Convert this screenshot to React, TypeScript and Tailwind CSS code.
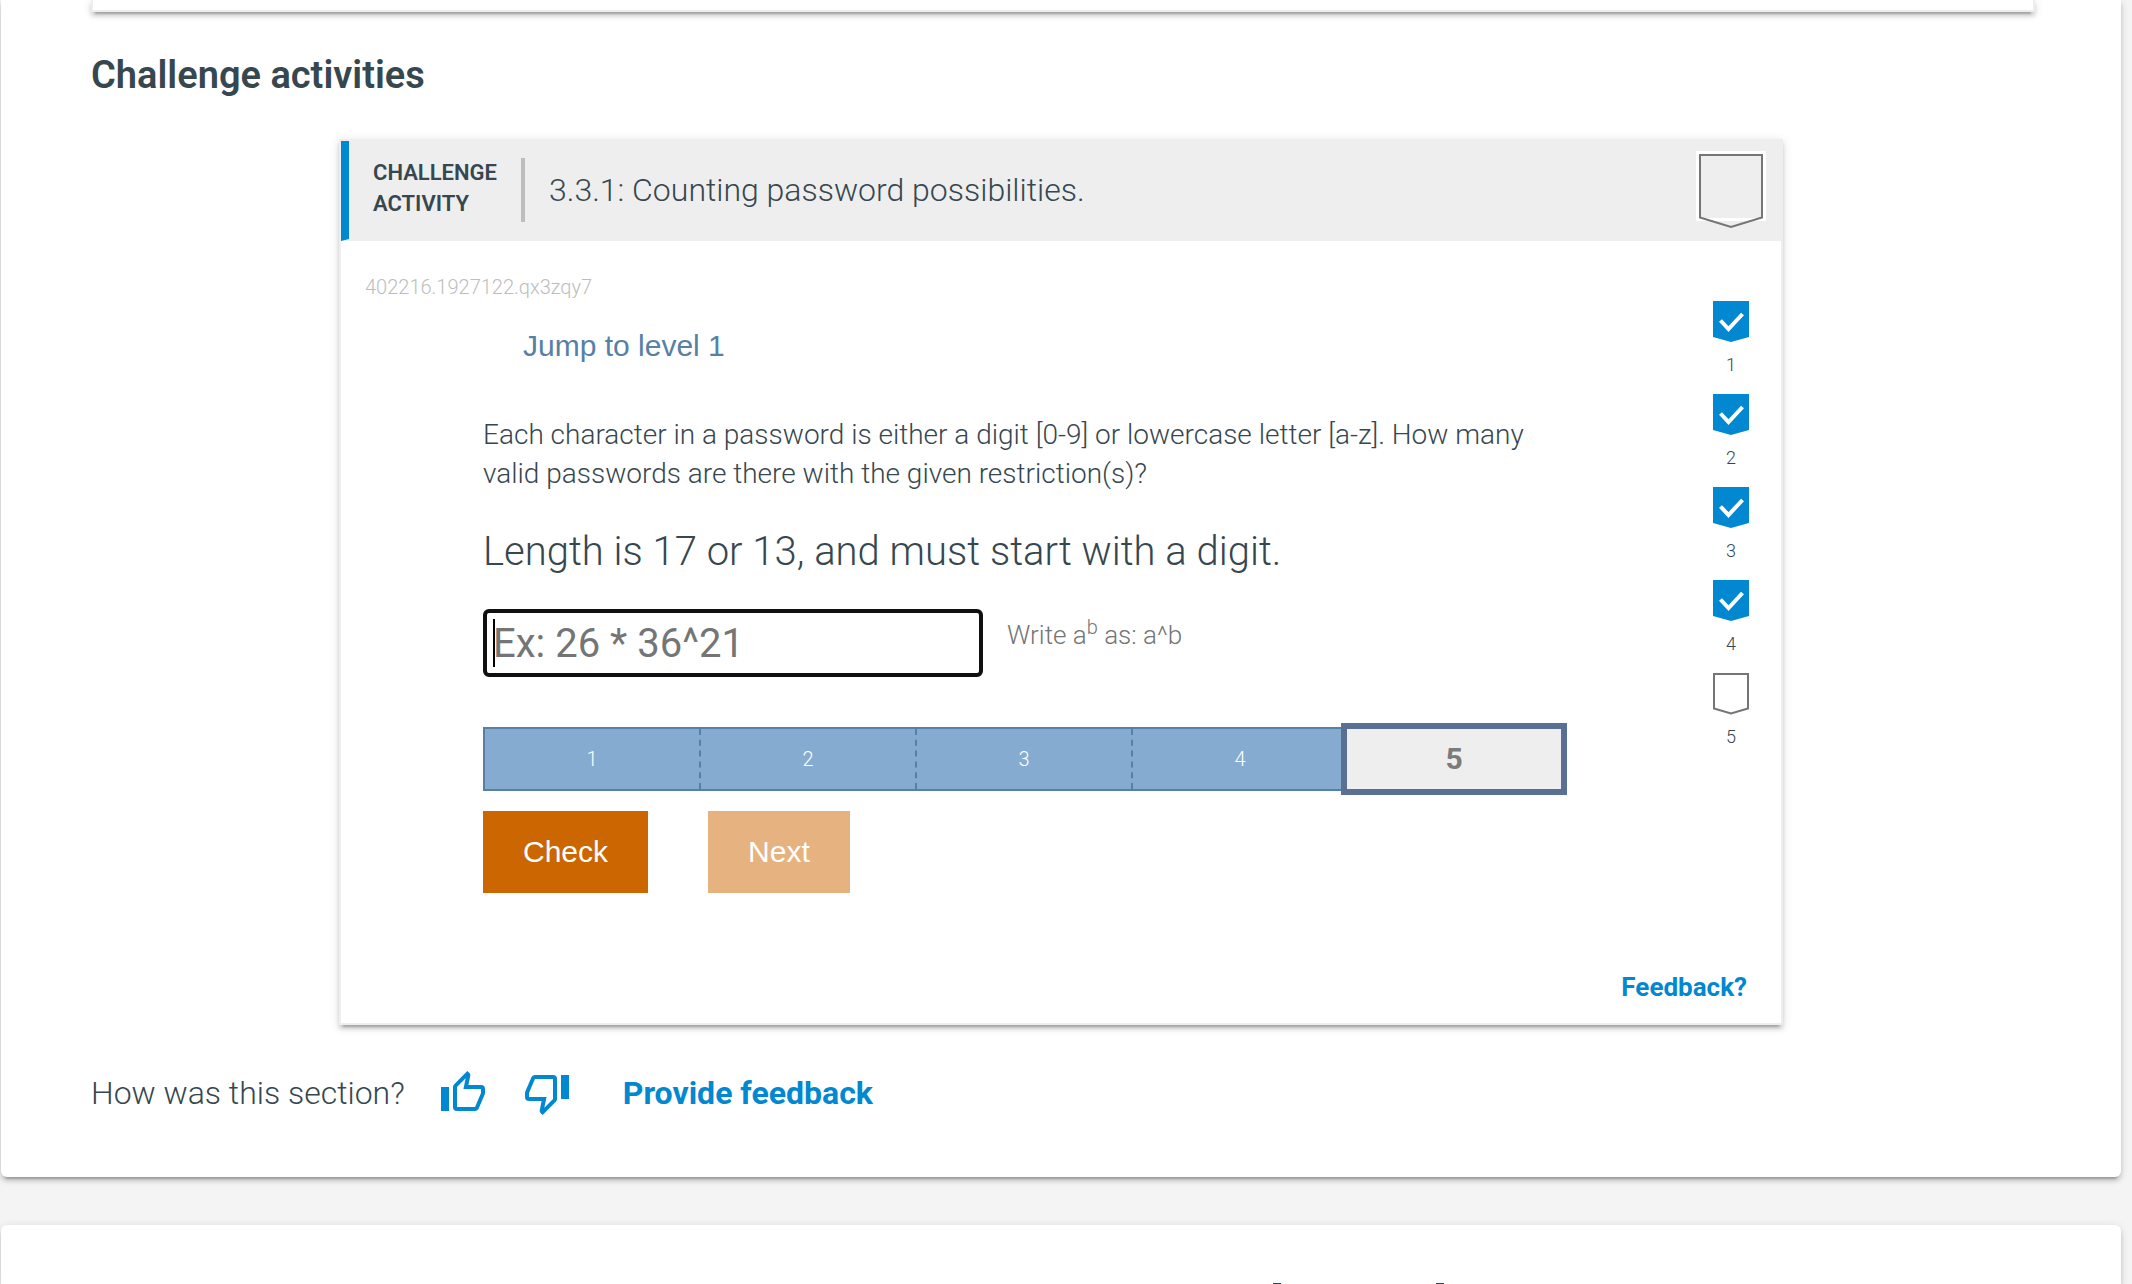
import clsx from "clsx";

const LEVELS = [1, 2, 3, 4, 5];
const CURRENT_LEVEL = 5;

const PANEL_SHADOW =
  "shadow-[0_6px_2px_-4px_rgba(0,0,0,0.2),0_4px_4px_0_rgba(0,0,0,0.14),0_2px_10px_0_rgba(0,0,0,0.12)]";

/** Large outlined badge in the activity header. */
function ActivityBadge() {
  return (
    <svg width="70" height="78" viewBox="0 0 70 78" className="shrink-0" aria-hidden="true">
      <rect width="70" height="70" fill="#fff" />
      <rect x="4" y="4" width="62" height="63" fill="#eeeeee" />
      <path d="M11 70h48l-24 7z" fill="#eeeeee" />
      <path d="M4 4h62v62.500l-31 9.500l-31-9.500z" fill="none" stroke="#757575" strokeWidth="2" />
    </svg>
  );
}

function LevelFlag({ done }: { done: boolean }) {
  return (
    <svg width="36" height="42" viewBox="0 0 36 42" aria-hidden="true">
      {done ? (
        <>
          <path d="M0 0h36v36l-18 5l-18-5z" fill="#0288d1" />
          <path d="M7.500 19.500l8 8.500l14-15" fill="none" stroke="#fff" strokeWidth="4" />
        </>
      ) : (
        <path d="M1 1h34v34.500l-17 5l-17-5z" fill="#fff" stroke="#757575" strokeWidth="2" />
      )}
    </svg>
  );
}

function ThumbIcon({ down = false }: { down?: boolean }) {
  return (
    <svg
      viewBox="0 0 24 24"
      className={clsx("size-12 fill-[#0288d1]", down && "rotate-180")}
      aria-hidden="true"
    >
      <path d="M5 9v12H1V9h4m4 12a2 2 0 0 1-2-2V9c0-.55.22-1.05.59-1.41L14.17 1l1.06 1.06c.27.27.44.64.44 1.05l-.03.32L14.69 8H21a2 2 0 0 1 2 2v2c0 .26-.05.5-.14.73l-3.02 7.05C19.54 20.5 18.83 21 18 21H9m0-2h9.03L21 12v-2h-8.790l1.130-5.320L9 9.030V19z" />
    </svg>
  );
}

function ProgressBar() {
  return (
    <ol className="mt-[50px] flex h-16 border-2 border-[#5780a5] bg-[#86abd1]">
      {LEVELS.map((level) => (
        <li
          key={level}
          className={clsx(
            "flex flex-1 items-center justify-center",
            level === CURRENT_LEVEL
              ? "bg-[#eeeeee] pb-0.5 text-[30px] font-bold text-[#7b7b7b] outline-[6px] outline-[#5a6f94]"
              : "text-xl font-light text-white",
            level < CURRENT_LEVEL - 1 && "border-r-2 border-dashed border-[#5780a5]"
          )}
        >
          {level}
        </li>
      ))}
    </ol>
  );
}

function Question() {
  return (
    <div className="max-w-[1080px]">
      <p className="mt-7 text-[28px] leading-[39px]">
        Each character in a password is either a digit [0-9] or lowercase letter [a-z]. How many
        valid passwords are there with the given restriction(s)?
      </p>
      <p className="mt-8 text-[40px] leading-[54px]">
        Length is 17 or 13, and must start with a digit.
      </p>

      <div className="mt-[30px] flex">
        <div className="relative">
          <input
            type="text"
            aria-label="Answer"
            placeholder="Ex: 26 * 36^21"
            className="block h-[68px] w-[500px] rounded-md border-4 border-[#101010] bg-white pl-1.5 text-[40px] font-normal caret-transparent outline-none placeholder:text-[#757575]"
          />
          <span className="absolute top-2.5 left-2.5 h-12 w-0.5 bg-black" />
        </div>
        <p className="mt-1.5 ml-6 text-[26px] leading-[40px] text-[#757575]">
          Write a<sup className="text-[20px]">b</sup> as: a^b
        </p>
      </div>

      <ProgressBar />

      <div className="mt-5 flex gap-[60px] font-['Liberation_Sans',Arial,sans-serif] text-[30px] font-normal text-white">
        <button type="button" className="h-[82px] bg-[#cc6600] px-10 pb-0.5">
          Check
        </button>
        <button type="button" disabled className="h-[82px] bg-[#e5b280] px-10 pb-0.5">
          Next
        </button>
      </div>
    </div>
  );
}

function ChallengeActivity() {
  return (
    <article
      className={clsx("mx-auto mt-10 max-w-[1444px] border-2 border-[#eeeeee] bg-white", PANEL_SHADOW)}
    >
      <header className="flex h-[100px] items-center border-b-2 border-l-8 border-b-[#eeeeee] border-l-[#0288d1] bg-[#eeeeee] pr-[15px] pl-6">
        <div className="w-[124px] pb-1 text-[22px] leading-[31px] font-semibold uppercase">
          Challenge activity
        </div>
        <div className="ml-6 h-16 w-1 bg-[#bdbdbd]" />
        <h3 className="ml-6 flex-1 text-[32px]">3.3.1: Counting password possibilities.</h3>
        <ActivityBadge />
      </header>

      <div className="flex">
        <div className="flex-1 pt-[31px] pl-6">
          <div className="text-xl leading-[30px] text-[#bdbdbd]">402216.1927122.qx3zqy7</div>
          <div className="pl-[118px]">
            <button
              type="button"
              className="mt-[3px] block h-[82px] px-10 pb-0.5 font-['Liberation_Sans',Arial,sans-serif] text-[30px] font-normal text-[#5780a5]"
            >
              Jump to level 1
            </button>
            <Question />
          </div>
        </div>

        <ol className="pt-[60px] pr-8">
          {LEVELS.map((level) => (
            <li key={level} className="flex h-[93px] flex-col items-center gap-2.5">
              <LevelFlag done={level < CURRENT_LEVEL} />
              <span className="text-lg leading-6">{level}</span>
            </li>
          ))}
        </ol>
      </div>

      <div className="mt-[74px] flex justify-end pr-[34px] pb-4">
        <a href="#feedback" className="text-[26px] leading-[40px] font-bold text-[#0288d1]">
          Feedback?
        </a>
      </div>
    </article>
  );
}

export default function App() {
  return (
    <main className="flex min-h-screen flex-col gap-12 overflow-hidden bg-[#f4f4f4] pr-[11px] pl-px font-[Roboto,sans-serif] font-light text-[#37474f]">
      <section className={clsx("rounded-b-md bg-white px-[90px] pb-[60px]", PANEL_SHADOW)}>
        {/* Bottom edge of the previous activity card */}
        <div className={clsx("-mr-1 h-3 border-2 border-t-0 border-[#eeeeee]", PANEL_SHADOW)} />

        <h2 className="mt-[39px] text-[38px] leading-[48px] font-semibold">Challenge activities</h2>

        <ChallengeActivity />

        <div className="mt-11 flex h-12 items-center text-[32px]">
          <span>How was this section?</span>
          <button type="button" aria-label="Thumbs up" className="ml-[34px]">
            <ThumbIcon />
          </button>
          <button type="button" aria-label="Thumbs down" className="ml-9">
            <ThumbIcon down />
          </button>
          <a href="#provide-feedback" className="ml-[52px] font-bold text-[#0288d1]">
            Provide feedback
          </a>
        </div>
      </section>

      <section className={clsx("flex flex-1 flex-col justify-end rounded-t-md bg-white", PANEL_SHADOW)}>
        {/* Tops of the next section's title */}
        <div className="flex gap-[155px] pl-[60%]" aria-hidden="true">
          <span className="h-px w-2 bg-[#37474f]" />
          <span className="h-px w-2 bg-[#37474f]" />
        </div>
      </section>
    </main>
  );
}
